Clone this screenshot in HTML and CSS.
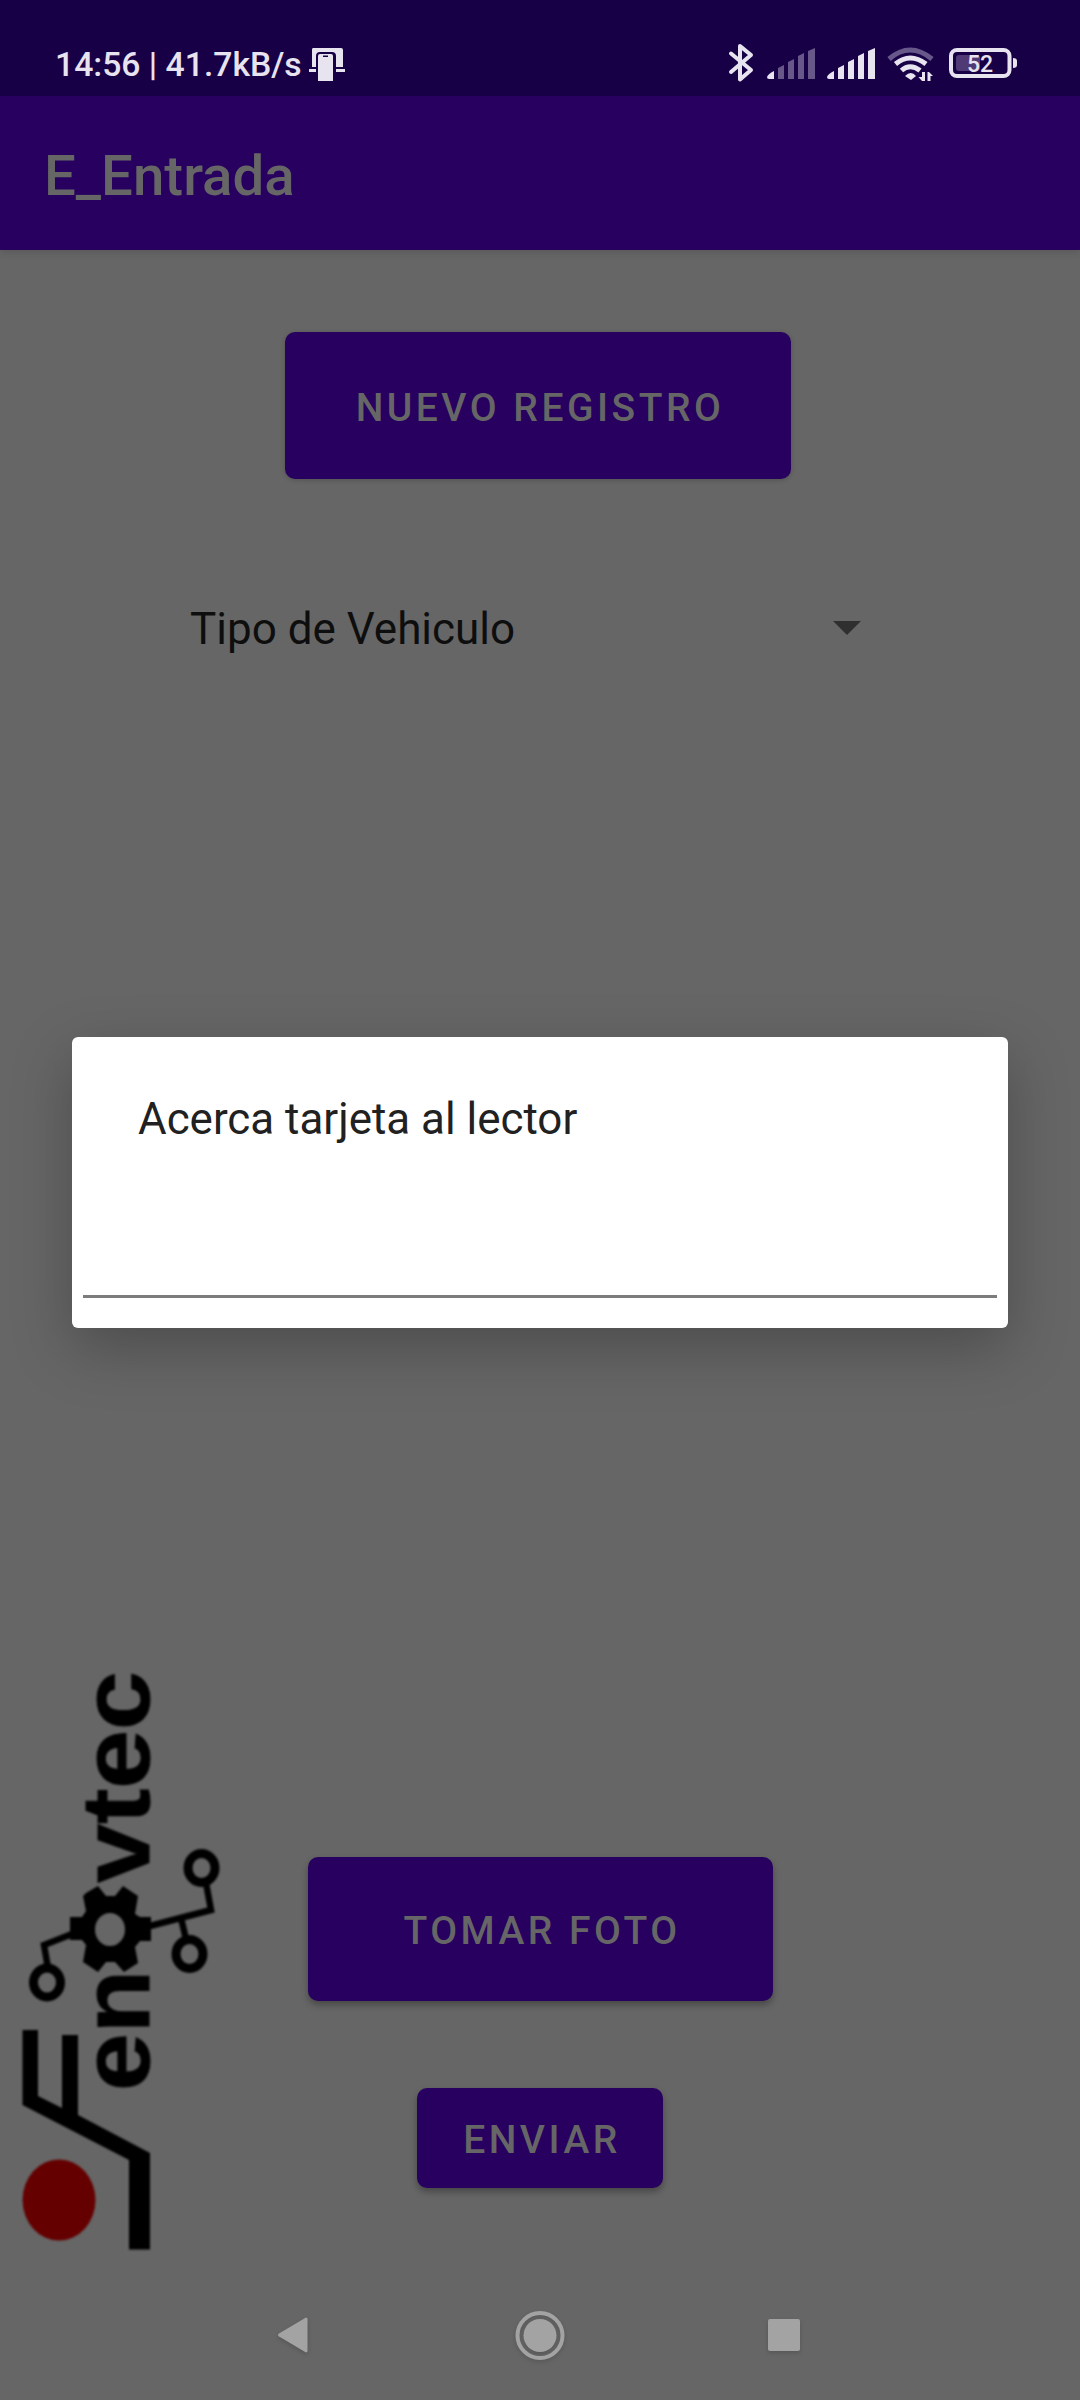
FILE: index.html
```html
<!DOCTYPE html>
<html lang="es">
<head>
<meta charset="utf-8">
<title>E_Entrada</title>
<link rel="stylesheet" href="styles.css">
</head>
<body>
<div class="screen">
  <header class="status">
    <span class="clock">14:56 | 41.7kB/s</span>
    <svg class="cast" width="38" height="36" viewBox="0 0 38 36" fill="#e8e4ef">
      <path d="M4 0H32Q34 0 34 2V19H27V8Q27 4 23 4H11Q7 4 7 8V19H3V2Q3 0 4 0ZM0 21H7V24H0ZM27 21H36V24H27Z"/>
      <path fill-rule="evenodd" d="M9 8Q9 6 11 6H22Q24 6 24 8V33H9ZM14 7.500V9H19V7.500Z"/>
    </svg>
    <svg class="indicators" width="300" height="50" viewBox="720 38 300 50" fill="#e8e4ef">
      <path d="M731 53.500L751 70L740 79.500V46L751 55L731 72" fill="none" stroke="#e8e4ef" stroke-width="4" stroke-linejoin="round" stroke-linecap="round"/>
      <g>
        <path d="M767 77Q768 74 774 71V79H769Q767 79 767 77Z"/>
        <path fill="#675889" d="M778 79V68L784 65V79ZM788 79V62L794 59V79ZM798 79V56L804 53V79ZM808 79V51L815 48V79Z"/>
      </g>
      <path d="M827 77Q828 74 834 71V79H829Q827 79 827 77ZM838 79V68L844 65V79ZM848 79V62L854 59V79ZM858 79V56L864 53V79ZM868 79V51L875 48V79Z"/>
      <g fill="none" stroke="#e8e4ef" stroke-width="5">
        <path stroke="#675889" d="M889 59Q910 41 932 59"/>
        <path d="M895.500 64Q910 52 926 64"/>
        <path d="M901.500 70.500Q910 63 920 70.500"/>
      </g>
      <path d="M905 76Q911 70 916 76L911 80ZM922 72H925V81H922L918.500 77H922ZM927.500 81V72H929L933 76H930.500V81Z"/>
      <rect x="956" y="55" width="24" height="16" rx="3" fill="#4f3a75"/>
      <rect x="951" y="50" width="58.500" height="26" rx="6" fill="none" stroke="#e8e4ef" stroke-width="4"/>
      <path d="M1013 58Q1017 58 1017 61V65Q1017 68 1013 68Z"/>
      <text class="level" x="967" y="72">52</text>
    </svg>
  </header>
  <div class="appbar"><h1 class="title">E_Entrada</h1></div>
  <main class="content">
    <button class="btn btn-new">NUEVO REGISTRO</button>
    <div class="spinner">
      <span class="choice">Tipo de Vehiculo</span>
      <svg width="28" height="14" viewBox="0 0 28 14"><path d="M0 0H28L14 14Z" fill="#2f2f2f"/></svg>
    </div>
    <section class="bottom">
      <svg class="logo" width="240" height="610" viewBox="0 1660 240 610">
        <g class="word">
          <text transform="translate(149 2091) rotate(-90)" textLength="121" lengthAdjust="spacingAndGlyphs">en</text>
          <text transform="translate(149 1883) rotate(-90)" textLength="212" lengthAdjust="spacingAndGlyphs">vtec</text>
        </g>
        <path fill-rule="evenodd" d="M86 1893L98 1886L106 1896H115L123 1886L138 1896L135 1914L140 1917H151V1941H140L135 1947L138 1963L124 1972L115 1962H106L98 1972L83 1962L86 1945L82 1940H70V1917H82L86 1911L83 1896ZM110 1913A15 16.500 0 1 0 110 1946A15 16.500 0 1 0 110 1913Z"/>
        <g fill="none" stroke="#000" stroke-width="9">
          <ellipse cx="201.500" cy="1868" rx="13.500" ry="14.500"/>
          <ellipse cx="189.500" cy="1954" rx="13.500" ry="14.500"/>
          <ellipse cx="47" cy="1982.500" rx="13.500" ry="14.500"/>
          <path stroke-width="6.500" d="M150 1926L211 1910L206 1883M181 1918L186 1939M72 1934L44 1945L48 1968"/>
        </g>
        <path d="M22.500 2030H38V2096L62 2108V2035H78V2115L150 2153V2249.500H129V2160L22.500 2105Z"/>
        <ellipse cx="59" cy="2200" rx="36.500" ry="40.500" fill="#650000"/>
      </svg>
      <div class="actions">
        <button class="btn btn-photo">TOMAR FOTO</button>
        <button class="btn btn-send">ENVIAR</button>
      </div>
    </section>
  </main>
  <nav class="nav">
    <svg width="32" height="38" viewBox="0 0 32 38"><path d="M2 17.500L29 1.500L30.500 2.500V35.500L29 36.500L2 20.500Q0 19 2 17.500Z"/></svg>
    <svg width="50" height="50" viewBox="0 0 50 50"><circle cx="26" cy="25.500" r="22.500" fill="none" stroke="#a3a3a3" stroke-width="4"/><circle cx="26" cy="25.500" r="16.500"/></svg>
    <svg width="32" height="32" viewBox="0 0 32 32"><rect width="32" height="32" rx="2"/></svg>
  </nav>
  <div class="dialog">
    <p class="message">Acerca tarjeta al lector</p>
    <div class="field"></div>
  </div>
</div>
</body>
</html>
```
FILE: styles.css
```css
* { box-sizing: border-box; }
body { margin: 0; font-family: Roboto, "Liberation Sans", sans-serif; }
.screen {
  position: relative;
  width: 1080px;
  height: 2400px;
  display: flex;
  flex-direction: column;
  overflow: hidden;
  background: #666;
}
.status {
  height: 96px;
  flex: none;
  display: flex;
  align-items: flex-start;
  padding-left: 55px;
  background: #180047;
  color: #e8e4ef;
}
.clock { width: 247px; padding-top: 45px; font-size: 33.700px; line-height: 40px; font-weight: 500; white-space: nowrap; }
.cast { margin: 48px 0 0 7px; }
.indicators { margin: 38px 60px 0 auto; }
.level { font-size: 23px; font-weight: 500; }
.appbar {
  height: 154px;
  flex: none;
  display: flex;
  align-items: center;
  padding: 5px 44px 0;
  background: #270060;
  box-shadow: 0 2px 8px rgba(0, 0, 0, .15);
}
.title { margin: 0; font-size: 56.400px; font-weight: 500; line-height: 64px; color: #666; }
.content { flex: 1; display: flex; flex-direction: column; }
.btn {
  flex: none;
  padding: 3px 0 0 4px;
  border: 0;
  border-radius: 10px;
  background: #270060;
  color: #666;
  font: 500 39px/46px Roboto, sans-serif;
  letter-spacing: 3.500px;
  box-shadow: 0 4px 7px rgba(0, 0, 0, .3);
}
.btn-new { width: 506px; height: 147px; margin: 82px 0 0 285px; padding-top: 5px; box-shadow: 0 1px 5px rgba(0, 0, 0, .2); }
.spinner {
  display: flex;
  align-items: center;
  justify-content: space-between;
  width: 671px;
  height: 64px;
  margin: 117px 0 0 190px;
  font-size: 44px;
  line-height: 64px;
  color: #0e0e0e;
}
.choice { padding-top: 1px; }
.bottom { display: grid; grid-template-columns: 240px 600px 240px; height: 610px; margin-top: auto; }
.logo { filter: blur(1px); }
.word { font: bold 97px "Liberation Sans", Arial, sans-serif; stroke: #000; stroke-width: 1px; }
.actions { display: flex; flex-direction: column; align-items: center; padding-top: 197px; }
.btn-photo { width: 465px; height: 144px; }
.btn-send { width: 246px; height: 100px; margin-top: 87px; }
.nav {
  flex: none;
  display: flex;
  align-items: center;
  justify-content: space-between;
  height: 130px;
  padding: 0 280px 0 277px;
  fill: #a3a3a3;
}
.nav svg { overflow: visible; filter: drop-shadow(0 2px 2px rgba(0, 0, 0, .15)); }
.dialog {
  position: absolute;
  left: 72px;
  top: 1037px;
  width: 936px;
  height: 291px;
  padding: 51px 11px 30px;
  display: flex;
  flex-direction: column;
  border-radius: 6px;
  background: #fff;
  box-shadow: 0 20px 60px rgba(0, 0, 0, .25);
}
.message { margin: 0; padding-left: 55px; font-size: 43.900px; line-height: 63px; color: #212121; }
.field { flex: 1; border-bottom: 3px solid #7c7c7c; }
```
